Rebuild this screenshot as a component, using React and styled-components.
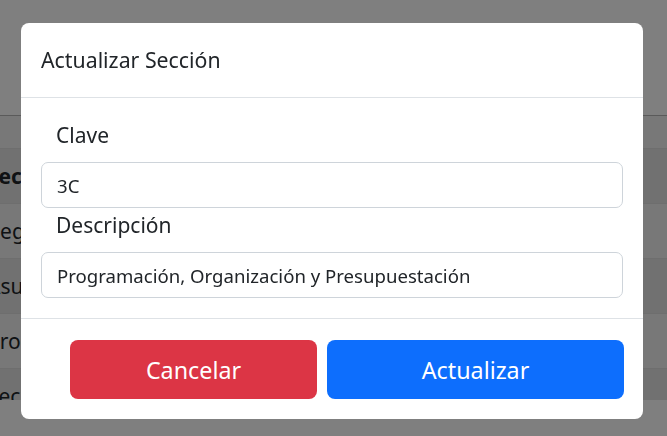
import React from 'react';
import styled, { createGlobalStyle } from 'styled-components';

const GlobalStyle = createGlobalStyle`
  html, body {
    margin: 0;
    padding: 0;
    background: #ffffff;
    font-family: "Segoe UI", "Noto Sans", "Liberation Sans", sans-serif;
    color: #212529;
    overflow: hidden;
  }
  * {
    box-sizing: border-box;
  }
`;

const rows = [
  { text: 'Sección', head: true },
  { text: 'Registro' },
  { text: 'Asuntos' },
  { text: 'Programación' },
  { text: 'Sección' },
];

export default function App() {
  return (
    <>
      <GlobalStyle />
      <Page>
        <TableWrap>
          <TopRow />
          {rows.map((r, i) => (
            <Row key={i} $dark={i % 2 === 0} $head={r.head}>
              {r.text}
            </Row>
          ))}
        </TableWrap>
      </Page>
      <Backdrop />
      <ModalLayer>
        <Dialog>
          <Header>
            <Title>Actualizar Sección</Title>
          </Header>
          <Body>
            <Label>Clave</Label>
            <Input defaultValue="3C" />
            <Label>Descripción</Label>
            <Input defaultValue="Programación, Organización y Presupuestación" />
          </Body>
          <Footer>
            <Button $variant="danger" $width={247}>Cancelar</Button>
            <Button $variant="primary" $width={297}>Actualizar</Button>
          </Footer>
        </Dialog>
      </ModalLayer>
    </>
  );
}

const Page = styled.div`
  width: 667px;
  height: 436px;
  padding-top: 115px;
`;

const TableWrap = styled.div`
  height: 285px;
  overflow: hidden;
  border-top: 1px solid #b4b4b4;
  margin-left: -13px;
`;

const TopRow = styled.div`
  height: 32px;
  background: #f0f0f0;
`;

const Row = styled.div`
  height: 55px;
  display: flex;
  align-items: center;
  font-size: 21px;
  font-weight: ${(p) => (p.$head ? 700 : 400)};
  background: ${(p) => (p.$dark ? '#e2e3e2' : '#f0f0f0')};
  border-top: 1px solid #dcdcdc;
`;

const Backdrop = styled.div`
  position: fixed;
  inset: 0;
  background: rgba(0, 0, 0, 0.5);
`;

const ModalLayer = styled.div`
  position: fixed;
  inset: 0;
  padding: 23px 0 0 21px;
`;

const Dialog = styled.div`
  width: 622px;
  background: #ffffff;
  border-radius: 8px;
  overflow: hidden;
  display: flex;
  flex-direction: column;
`;

const Header = styled.div`
  padding: 22px 20px;
  border-bottom: 1px solid #dee2e6;
`;

const Title = styled.h5`
  margin: 0;
  font-size: 21.3px;
  line-height: 30px;
  font-weight: 400;
  color: #212529;
`;

const Body = styled.div`
  display: flex;
  flex-direction: column;
  padding: 22px 20px 18px;
`;

const Label = styled.label`
  font-size: 21px;
  line-height: 30px;
  padding-left: 15px;
  margin-bottom: 12px;
  color: #212529;
`;

const Input = styled.input`
  height: 46px;
  width: 100%;
  border: 1px solid #ced4da;
  border-radius: 7px;
  padding: 0 15px;
  font-family: inherit;
  font-size: 18.6px;
  color: #212529;
  background: #fff;
  outline: none;
  margin-bottom: 2px;
`;

const Footer = styled.div`
  display: flex;
  gap: 10px;
  padding: 21px 19px 20px 49px;
  border-top: 1px solid #dee2e6;
`;

const Button = styled.button`
  width: ${(p) => p.$width}px;
  height: 59px;
  border: none;
  border-radius: 8px;
  font-family: inherit;
  font-size: 23.3px;
  color: #ffffff;
  background: ${(p) => (p.$variant === 'danger' ? '#dc3545' : '#0d6efd')};
`;
